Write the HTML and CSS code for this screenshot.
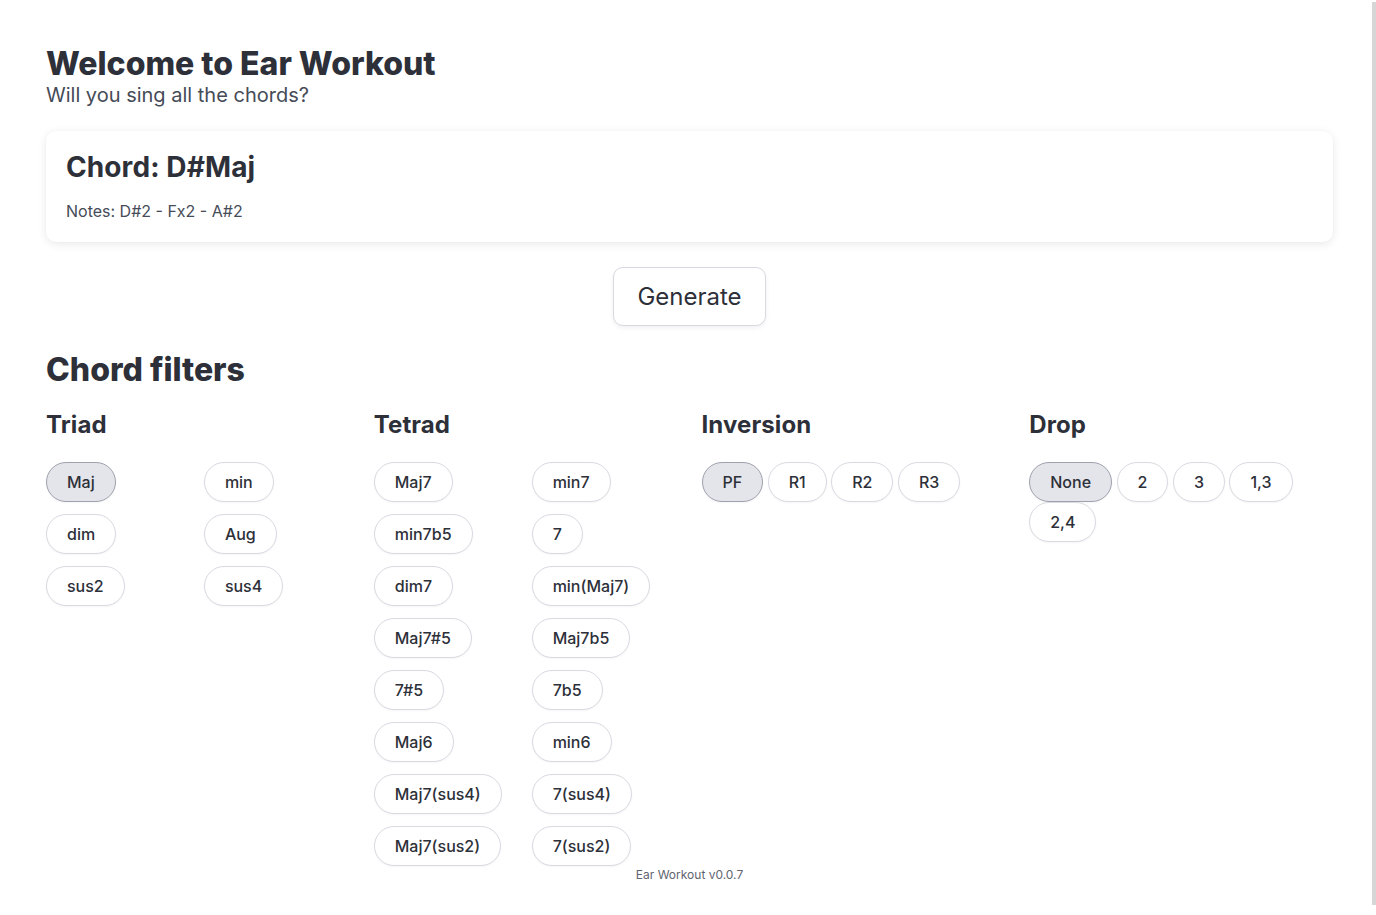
FILE: index.html
```html
<!DOCTYPE html>
<html lang="en">
<head>
<meta charset="utf-8">
<title>Ear Workout</title>
<link rel="stylesheet" href="styles.css">
</head>
<body>
<div class="scrollbar"></div>
<main class="page">
  <header class="intro">
    <h1 class="title">Welcome to Ear Workout</h1>
    <p class="subtitle">Will you sing all the chords?</p>
  </header>

  <section class="card">
    <h2 class="chord">Chord: D#Maj</h2>
    <p class="notes">Notes: D#2 - Fx2 - A#2</p>
  </section>

  <div class="actions">
    <button class="generate">Generate</button>
  </div>

  <h2 class="filters-title">Chord filters</h2>

  <div class="filters">
    <div class="group">
      <h3 class="group-title">Triad</h3>
      <div class="pair-grid">
        <button class="chip active">Maj</button>
        <button class="chip">min</button>
        <button class="chip">dim</button>
        <button class="chip">Aug</button>
        <button class="chip">sus2</button>
        <button class="chip">sus4</button>
      </div>
    </div>
    <div class="group">
      <h3 class="group-title">Tetrad</h3>
      <div class="pair-grid">
        <button class="chip">Maj7</button>
        <button class="chip">min7</button>
        <button class="chip">min7b5</button>
        <button class="chip">7</button>
        <button class="chip">dim7</button>
        <button class="chip">min(Maj7)</button>
        <button class="chip">Maj7#5</button>
        <button class="chip">Maj7b5</button>
        <button class="chip">7#5</button>
        <button class="chip">7b5</button>
        <button class="chip">Maj6</button>
        <button class="chip">min6</button>
        <button class="chip">Maj7(sus4)</button>
        <button class="chip">7(sus4)</button>
        <button class="chip">Maj7(sus2)</button>
        <button class="chip">7(sus2)</button>
      </div>
    </div>
    <div class="group">
      <h3 class="group-title">Inversion</h3>
      <div class="inline-list">
        <button class="chip active">PF</button>
        <button class="chip">R1</button>
        <button class="chip">R2</button>
        <button class="chip">R3</button>
      </div>
    </div>
    <div class="group">
      <h3 class="group-title">Drop</h3>
      <div class="inline-list">
        <button class="chip active">None</button>
        <button class="chip">2</button>
        <button class="chip">3</button>
        <button class="chip">1,3</button>
        <button class="chip">2,4</button>
      </div>
    </div>
  </div>

  <footer class="footer">Ear Workout v0.0.7</footer>
</main>
</body>
</html>
```

FILE: styles.css
```css
* { box-sizing: border-box; }

html, body {
  margin: 0;
  padding: 0;
  background: #ffffff;
}

body {
  font-family: Inter, "Noto Sans", sans-serif;
  color: #2d3039;
}

.scrollbar {
  position: fixed;
  top: 2px;
  right: 0;
  width: 4px;
  bottom: 10px;
  background: #d6d6d6;
}

.page {
  width: 1287px;
  margin-left: 46px;
  padding-top: 44px;
}

.title {
  margin: 0;
  font-size: 32px;
  line-height: 40px;
  font-weight: 800;
}

.subtitle {
  margin: 0;
  font-size: 20px;
  line-height: 22px;
  color: #454b57;
}

.card {
  margin-top: 25px;
  height: 111px;
  padding: 19px 20px 18px;
  border-radius: 10px;
  background: #fff;
  box-shadow: 0 2px 10px rgba(0, 0, 0, 0.09), 0 0 2px rgba(0, 0, 0, 0.03);
}

.chord {
  margin: 0;
  font-size: 28px;
  line-height: 34px;
  font-weight: 700;
  letter-spacing: 0.1px;
}

.notes {
  margin: 17px 0 0;
  font-size: 16px;
  line-height: 20px;
  color: #454b57;
}

.actions {
  display: flex;
  justify-content: center;
  margin-top: 25px;
}

.generate {
  font-family: inherit;
  font-size: 24px;
  color: #2d3039;
  background: #fff;
  height: 59px;
  width: 153px;
  border: 1px solid #d8d8e0;
  border-radius: 10px;
  box-shadow: 0 2px 5px rgba(0, 0, 0, 0.06);
}

.filters-title {
  margin: 24px 0 0;
  font-size: 32px;
  line-height: 40px;
  font-weight: 800;
}

.filters {
  display: grid;
  grid-template-columns: repeat(4, 1fr);
  column-gap: 24px;
  margin-top: 20px;
}

.group-title {
  margin: 0;
  font-size: 24px;
  line-height: 30px;
  font-weight: 700;
  letter-spacing: 0.1px;
}

.pair-grid {
  margin-top: 22px;
  display: grid;
  grid-template-columns: 1fr 1fr;
  column-gap: 12px;
  row-gap: 12px;
  justify-items: start;
}

.inline-list {
  margin-top: 22px;
  line-height: 39px;
}

.chip {
  font-family: inherit;
  font-size: 16px;
  font-weight: 500;
  line-height: 20px;
  height: 40px;
  padding: 9px 20px;
  color: #2d3039;
  background: #fff;
  border: 1px solid #d9d9e2;
  border-radius: 20px;
  vertical-align: top;
  box-shadow: 0 1px 2px rgba(0, 0, 0, 0.04);
}

.chip.active {
  background: #e4e5ea;
  border-color: #9ea2ad;
}

.footer {
  margin-top: 1px;
  text-align: center;
  font-size: 12px;
  line-height: 16px;
  color: #5f6470;
}
```
